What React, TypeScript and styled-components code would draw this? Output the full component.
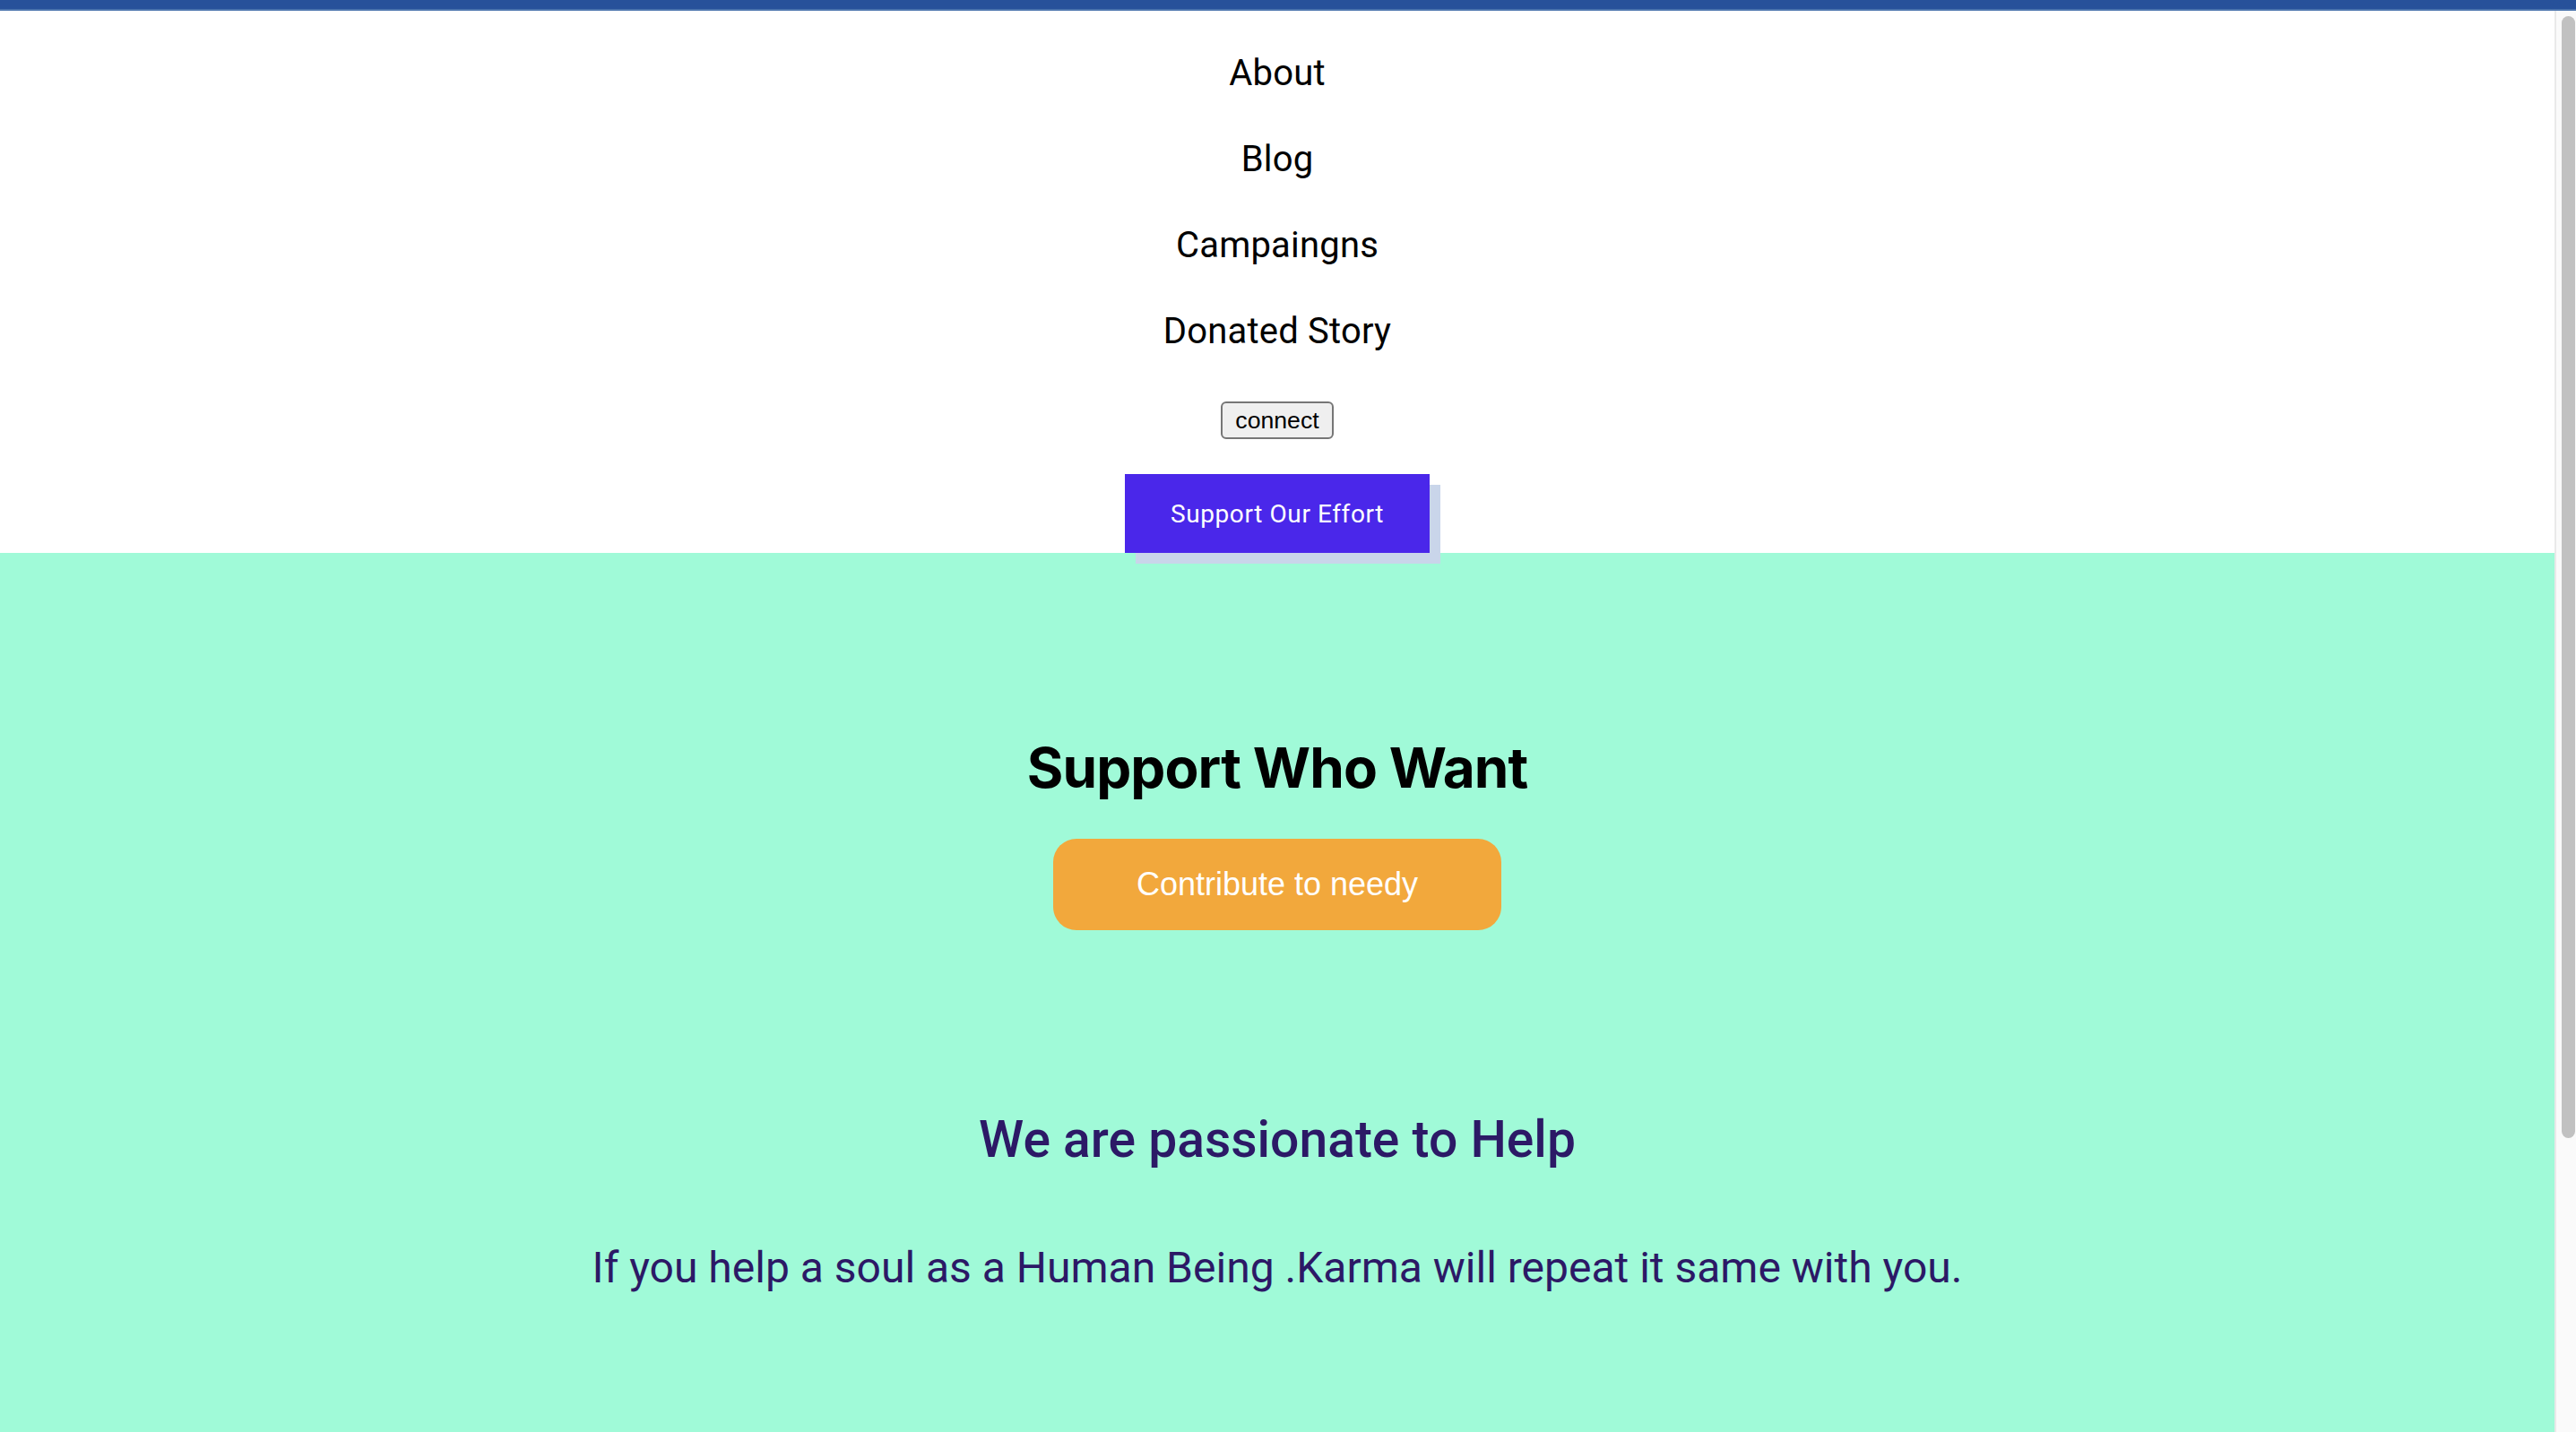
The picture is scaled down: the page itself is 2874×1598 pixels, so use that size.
import React from "react";
import styled, { createGlobalStyle } from "styled-components";

const GlobalStyle = createGlobalStyle`
  html, body { margin: 0; padding: 0; height: 100%; overflow: hidden; }
  body { font-family: Roboto, "Liberation Sans", sans-serif; background: #ffffff; }
  #root { height: 100%; }
`;

const Frame = styled.div`
  display: flex;
  flex-direction: column;
  height: 100vh;
`;

const TopBar = styled.div`
  flex: 0 0 auto;
  height: 10px;
  background: #27519a;
  border-bottom: 2px solid #4b74ad;
`;

const Viewport = styled.div`
  flex: 1 1 auto;
  display: flex;
  min-height: 0;
`;

const Scroller = styled.main`
  flex: 1 1 auto;
  min-width: 0;
  overflow: hidden;
`;

const ScrollTrack = styled.div`
  flex: 0 0 22px;
  display: flex;
  flex-direction: column;
  background: #fafafa;
  border-left: 2px solid #e9e9e9;
`;

const ScrollThumb = styled.div`
  height: 1252px;
  margin: 6px 1px 0 6px;
  border-radius: 8px;
  background: #c1c1c1;
`;

const Header = styled.header`
  display: flex;
  flex-direction: column;
  align-items: center;
  padding-top: 46px;
  background: #ffffff;
`;

const NavList = styled.nav`
  display: flex;
  flex-direction: column;
  align-items: center;
  gap: 49px;
`;

const NavLink = styled.a`
  font-family: Roboto, sans-serif;
  font-size: 40px;
  line-height: 47px;
  color: #000000;
  text-decoration: none;
  letter-spacing: 0.2px;
`;

const ConnectButton = styled.button`
  margin-top: 55px;
  height: 42px;
  padding: 0 14px;
  font-family: "Liberation Sans", Arial, sans-serif;
  font-size: 26.67px;
  color: #000000;
  background: #efefef;
  border: 2px solid #767676;
  border-radius: 6px;
`;

const EffortButton = styled.button`
  margin-top: 39px;
  height: 88px;
  padding: 0 51px;
  font-family: Roboto, sans-serif;
  font-size: 28px;
  letter-spacing: 0.6px;
  color: #ffffff;
  background: #4a27ea;
  border: none;
  box-shadow: 12px 12px 0 #c9d5ea;
  position: relative;
  z-index: 1;
`;

const Hero = styled.section`
  display: flex;
  flex-direction: column;
  align-items: center;
  background: #a0fad8;
  padding: 201px 0 562px;
`;

const Title = styled.h1`
  margin: 0;
  font-family: Inter, sans-serif;
  font-weight: 700;
  font-size: 62px;
  line-height: 77px;
  letter-spacing: -0.9px;
  color: #000000;
`;

const ContributeButton = styled.button`
  margin-top: 41px;
  width: 500px;
  height: 102px;
  font-family: "Liberation Sans", Arial, sans-serif;
  font-size: 36px;
  color: #ffffff;
  background: #f2a83c;
  border: none;
  border-radius: 26px;
`;

const Subtitle = styled.h2`
  margin: 201px 0 0;
  font-family: Roboto, sans-serif;
  font-weight: 500;
  font-size: 57px;
  line-height: 66px;
  color: #2c1966;
`;

const Lead = styled.p`
  margin: 82px 0 0;
  font-family: Roboto, sans-serif;
  font-weight: 400;
  font-size: 48px;
  line-height: 56px;
  color: #2c1966;
`;

const links = ["About", "Blog", "Campaingns", "Donated Story"];

export default function App() {
  return (
    <Frame>
      <GlobalStyle />
      <TopBar />
      <Viewport>
        <Scroller>
          <Header>
            <NavList>
              {links.map((l) => (
                <NavLink key={l} href="#">
                  {l}
                </NavLink>
              ))}
            </NavList>
            <ConnectButton>connect</ConnectButton>
            <EffortButton>Support Our Effort</EffortButton>
          </Header>
          <Hero>
            <Title>Support Who Want</Title>
            <ContributeButton>Contribute to needy</ContributeButton>
            <Subtitle>We are passionate to Help</Subtitle>
            <Lead>If you help a soul as a Human Being .Karma will repeat it same with you.</Lead>
          </Hero>
        </Scroller>
        <ScrollTrack>
          <ScrollThumb />
        </ScrollTrack>
      </Viewport>
    </Frame>
  );
}
